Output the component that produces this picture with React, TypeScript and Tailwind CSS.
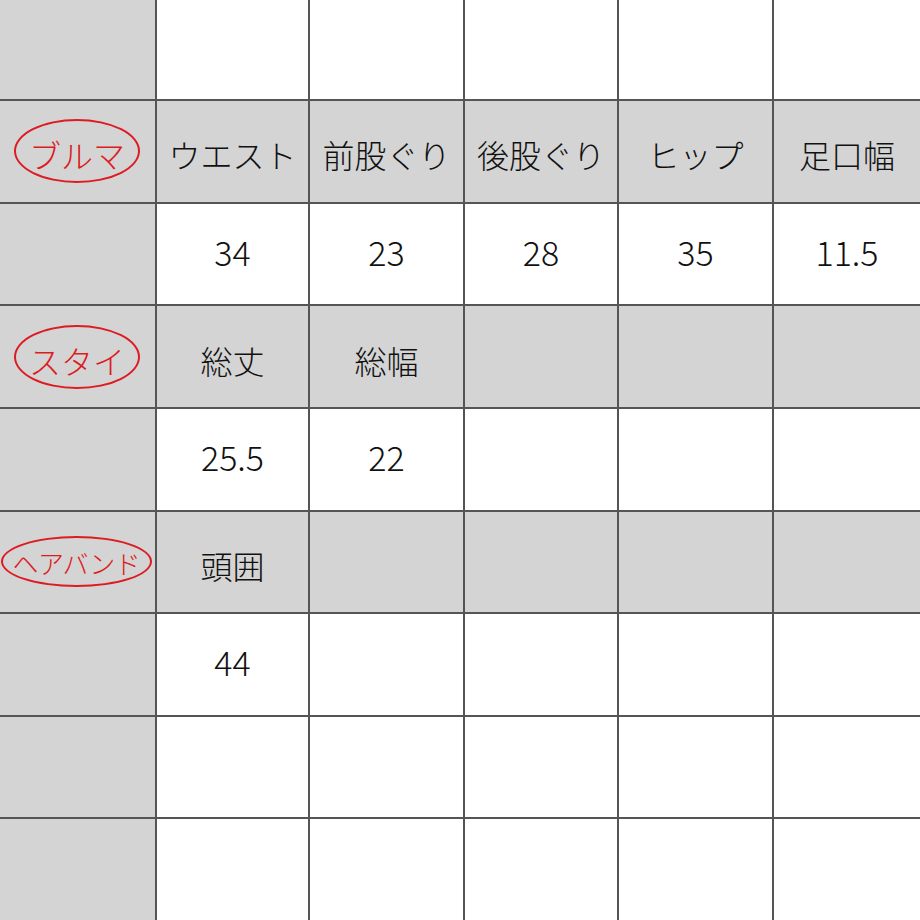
const rows: { grey: boolean; label?: { text: string; small?: boolean }; cells: string[] }[] = [
  { grey: false, cells: ['', '', '', '', ''] },
  { grey: true, label: { text: 'ブルマ' }, cells: ['ウエスト', '前股ぐり', '後股ぐり', 'ヒップ', '足口幅'] },
  { grey: false, cells: ['34', '23', '28', '35', '11.5'] },
  { grey: true, label: { text: 'スタイ' }, cells: ['総丈', '総幅', '', '', ''] },
  { grey: false, cells: ['25.5', '22', '', '', ''] },
  { grey: true, label: { text: 'ヘアバンド', small: true }, cells: ['頭囲', '', '', '', ''] },
  { grey: false, cells: ['44', '', '', '', ''] },
  { grey: false, cells: ['', '', '', '', ''] },
  { grey: false, cells: ['', '', '', '', ''] },
];

const Label = ({ text, small }: { text: string; small?: boolean }) =>
  small ? (
    <div className="flex items-center justify-center w-[151px] h-[51px] rounded-[50%] border-2 border-[#dc1c22] text-[#dc1c22] text-[26px] font-light leading-none pt-[3px] -ml-[2px] tracking-[-0.5px]">
      {text}
    </div>
  ) : (
    <div className="flex items-center justify-center w-[126px] h-[64px] rounded-[50%] border-2 border-[#dc1c22] text-[#dc1c22] text-[32px] font-light leading-none pt-[6px] -ml-[1px]">
      {text}
    </div>
  );

const isNum = (s: string) => /^[0-9.]+$/.test(s);

export default function App() {
  return (
    <div
      className="w-[920px] h-[920px] overflow-hidden bg-[#555555] grid grid-cols-[155px_151px_153px_152px_153px_1fr] grid-rows-[99px_repeat(8,1fr)] gap-[2px]"
      style={{ fontFamily: '"Noto Sans CJK JP", "Noto Sans", sans-serif' }}
    >
      {rows.map((row, r) => (
        <>
          <div key={`l${r}`} className="bg-[#d4d4d4] flex items-center justify-center">
            {row.label && <Label text={row.label.text} small={row.label.small} />}
          </div>
          {row.cells.map((c, i) => (
            <div
              key={`c${r}-${i}`}
              className={`${row.grey ? 'bg-[#d4d4d4] pt-[6px]' : 'bg-white pb-[4px]'} ${isNum(c) ? 'text-[34px]' : 'text-[32px]'} flex items-center justify-center font-light text-[#111111] leading-none whitespace-nowrap`}
            >
              {c}
            </div>
          ))}
        </>
      ))}
    </div>
  );
}
